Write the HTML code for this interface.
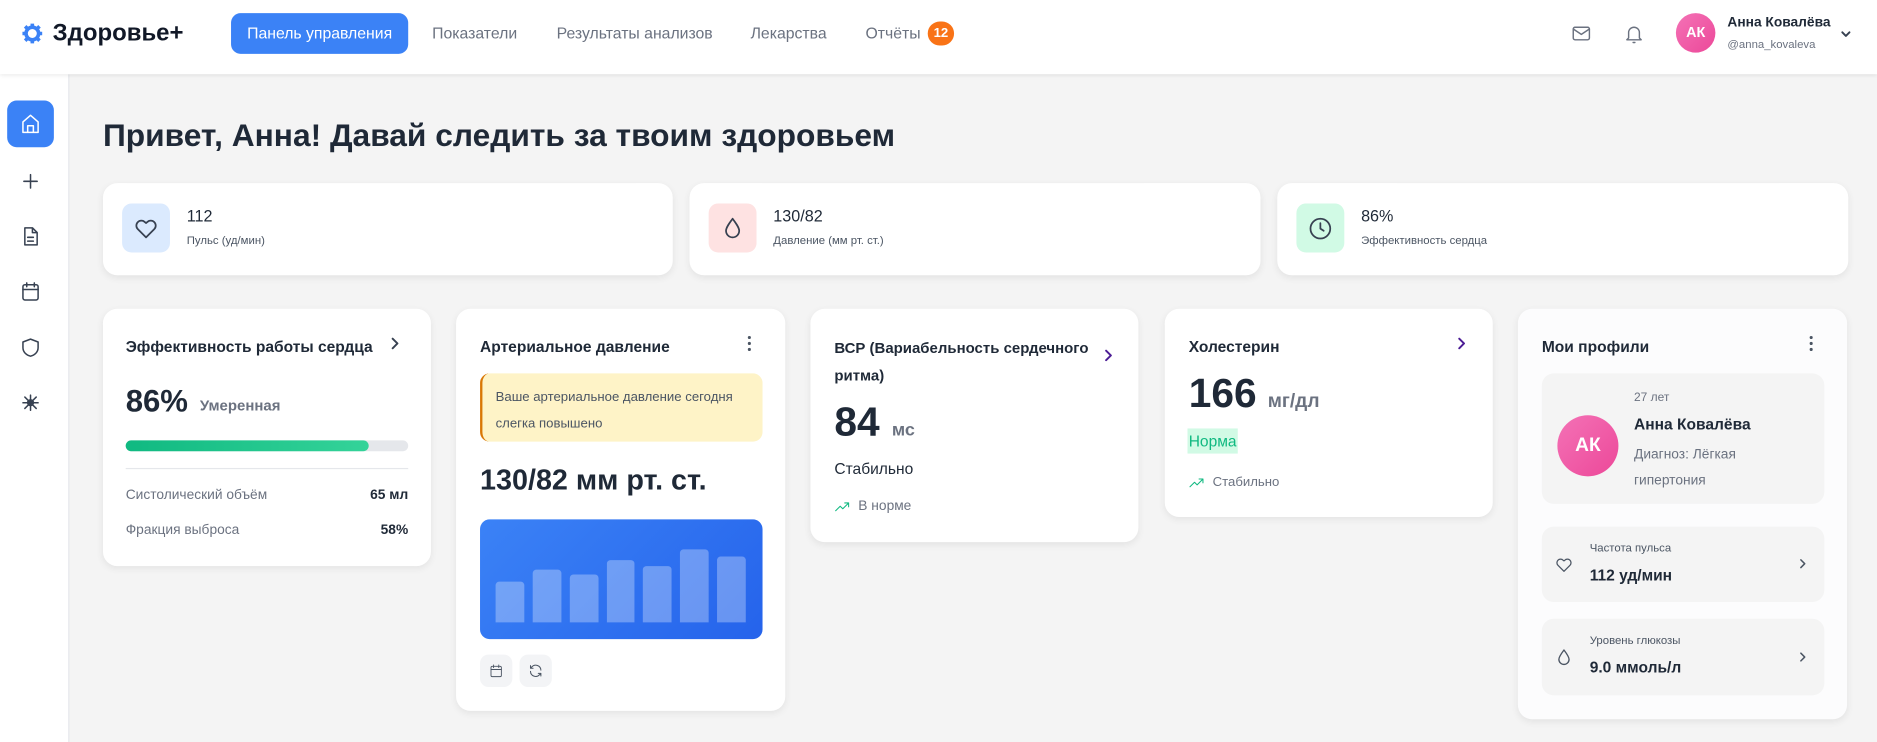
<!DOCTYPE html>
<html><head><meta charset="utf-8"><style>
*{box-sizing:border-box;margin:0;padding:0}
html,body{width:1877px;height:742px;overflow:hidden;background:#f4f4f4}
#w{position:absolute;left:0;top:0;width:1568px;height:620px;transform:scale(1.19707,1.1968);transform-origin:0 0;font-family:"Liberation Sans","DejaVu Sans",sans-serif;color:#1f2937;background:#f4f4f4}
.a{position:absolute}
.hdr{left:0;top:0;width:1568px;height:62px;background:#fff;box-shadow:0 1px 3px rgba(0,0,0,.08);z-index:2}
.nav{top:11px;height:34px;line-height:34px;font-size:13.2px;color:#6b7280}
.side{left:0;top:62px;width:58px;height:558px;background:#fff;border-right:1px solid #e5e7eb}
.card{background:#fff;border-radius:12px;box-shadow:0 2px 6px rgba(0,0,0,.07)}
.ic{stroke:#374151;fill:none;stroke-width:1.6;stroke-linecap:round;stroke-linejoin:round}
.t{font-size:13px;font-weight:bold;color:#1f2937}
.sq{width:40px;height:41px;border-radius:8px;left:16px;top:17px;display:flex;align-items:center;justify-content:center}
.sv{left:70px;top:20px;font-size:13.5px}
.sl{left:70px;top:43px;font-size:9.5px;color:#4b5563}
.gray{background:#f4f4f4;border-radius:10px}
</style></head><body><div id="w">
<div class="a hdr">
 <svg class="a" style="left:18px;top:19px" width="18" height="18" viewBox="0 0 24 24"><circle cx="12" cy="12" r="7" fill="none" stroke="#3b82f6" stroke-width="4"/><g stroke="#3b82f6" stroke-width="4"><line x1="12" y1="1" x2="12" y2="4"/><line x1="12" y1="20" x2="12" y2="23"/><line x1="1" y1="12" x2="4" y2="12"/><line x1="20" y1="12" x2="23" y2="12"/><line x1="4" y1="4" x2="6" y2="6"/><line x1="18" y1="18" x2="20" y2="20"/><line x1="4" y1="20" x2="6" y2="18"/><line x1="18" y1="6" x2="20" y2="4"/></g></svg>
 <div class="a" style="left:44px;top:17px;font-size:20px;font-weight:bold;color:#111827">Здоровье+</div>
 <div class="a nav" style="left:193px;width:148px;background:#3b82f6;color:#fff;border-radius:8px;text-align:center">Панель управления</div>
 <div class="a nav" style="left:361px">Показатели</div>
 <div class="a nav" style="left:465px">Результаты анализов</div>
 <div class="a nav" style="left:627px">Лекарства</div>
 <div class="a nav" style="left:723px">Отчёты</div>
 <div class="a" style="left:775px;top:18px;width:22px;height:20px;border-radius:10px;background:#f97316;color:#fff;font-size:11px;font-weight:bold;text-align:center;line-height:20px">12</div>
 <svg class="a ic" style="left:1312px;top:19px;stroke:#6b7280" width="18" height="18" viewBox="0 0 24 24"><rect x="3" y="5" width="18" height="14" rx="2"/><path d="M3 7l9 6 9-6"/></svg>
 <svg class="a ic" style="left:1356px;top:18px;stroke:#6b7280" width="18" height="20" viewBox="0 0 24 24"><path d="M6 17V11a6 6 0 0112 0v6l2 2H4zM11 22h2"/></svg>
 <div class="a" style="left:1400px;top:11px;width:33px;height:33px;border-radius:50%;background:linear-gradient(135deg,#f472b6,#ec4899);color:#fff;font-size:12px;font-weight:bold;text-align:center;line-height:33px">АК</div>
 <div class="a" style="left:1443px;top:13px;font-size:11.5px;font-weight:bold">Анна Ковалёва</div>
 <div class="a" style="left:1443px;top:32px;font-size:9.5px;color:#6b7280">@anna_kovaleva</div>
 <svg class="a ic" style="left:1537px;top:24px" width="10" height="10" viewBox="0 0 10 10"><path d="M2 3l3 3 3-3"/></svg>
</div>
<div class="a side">
 <div class="a" style="left:6px;top:22px;width:39px;height:39px;border-radius:8px;background:#3b82f6"></div>
 <svg class="a ic" style="left:16px;top:32px;stroke:#fff" width="19" height="19" viewBox="0 0 24 24"><path d="M4 10l8-7 8 7v11H4z M9 21v-7h6v7"/></svg>
 <svg class="a ic" style="left:16px;top:80px" width="19" height="19" viewBox="0 0 24 24"><path d="M12 5v14M5 12h14"/></svg>
 <svg class="a ic" style="left:16px;top:126px" width="19" height="19" viewBox="0 0 24 24"><path d="M6 3h8l5 5v13H6z M14 3v5h5 M9 13h6 M9 17h6"/></svg>
 <svg class="a ic" style="left:16px;top:172px" width="19" height="19" viewBox="0 0 24 24"><rect x="4" y="5" width="16" height="16" rx="2"/><path d="M4 10h16M8 3v4M16 3v4"/></svg>
 <svg class="a ic" style="left:16px;top:219px" width="19" height="19" viewBox="0 0 24 24"><path d="M12 3l8 3v6c0 5-4 8-8 9-4-1-8-4-8-9V6z"/></svg>
 <svg class="a ic" style="left:16px;top:265px" width="19" height="19" viewBox="0 0 24 24"><path d="M12 4v16M4 12h16M6 6l12 12M18 6L6 18"/><circle cx="12" cy="12" r="3"/></svg>
</div>
<div class="a" style="left:86px;top:98px;font-size:26.5px;font-weight:bold;color:#1f2937">Привет, Анна! Давай следить за твоим здоровьем</div>

<div class="a card" style="left:86px;top:153px;width:476px;height:77px">
 <div class="a sq" style="background:#dbeafe"><svg class="ic" width="22" height="22" viewBox="0 0 24 24"><path d="M12 20l-7.5-7.5a4.5 4.5 0 016.4-6.4L12 7l1.1-.9a4.5 4.5 0 016.4 6.4z"/></svg></div>
 <div class="a sv">112</div><div class="a sl">Пульс (уд/мин)</div></div>
<div class="a card" style="left:576px;top:153px;width:477px;height:77px">
 <div class="a sq" style="background:#fee2e2"><svg class="ic" width="22" height="22" viewBox="0 0 24 24"><path d="M12 3c3 4 6 8 6 11a6 6 0 01-12 0c0-3 3-7 6-11z"/></svg></div>
 <div class="a sv">130/82</div><div class="a sl">Давление (мм рт. ст.)</div></div>
<div class="a card" style="left:1067px;top:153px;width:477px;height:77px">
 <div class="a sq" style="background:#d1fae5"><svg class="ic" width="22" height="22" viewBox="0 0 24 24"><circle cx="12" cy="12" r="9"/><path d="M12 7v5l3 2"/></svg></div>
 <div class="a sv">86%</div><div class="a sl">Эффективность сердца</div></div>

<div class="a card" style="left:86px;top:258px;width:274px;height:215px">
 <div class="a t" style="left:19px;top:24px">Эффективность работы сердца</div>
 <svg class="a ic" style="left:239px;top:24px" width="10" height="10" viewBox="0 0 10 10"><path d="M3 1l4 4-4 4"/></svg>
 <div class="a" style="left:19px;top:62px;font-size:26px;font-weight:bold">86%</div>
 <div class="a" style="left:81px;top:74px;font-size:12.5px;font-weight:bold;color:#6b7280">Умеренная</div>
 <div class="a" style="left:19px;top:110px;width:236px;height:9px;border-radius:5px;background:#e5e7eb"><div style="width:203px;height:9px;border-radius:5px;background:linear-gradient(90deg,#10b981,#34d399)"></div></div>
 <div class="a" style="left:19px;top:133px;width:236px;height:1px;background:#e5e7eb"></div>
 <div class="a" style="left:19px;top:150px;font-size:11.5px;color:#6b7280">Систолический объём</div>
 <div class="a" style="right:19px;top:150px;font-size:11.5px;font-weight:bold">65 мл</div>
 <div class="a" style="left:19px;top:179px;font-size:11.5px;color:#6b7280">Фракция выброса</div>
 <div class="a" style="right:19px;top:179px;font-size:11.5px;font-weight:bold">58%</div>
</div>

<div class="a card" style="left:381px;top:258px;width:275px;height:336px">
 <div class="a t" style="left:20px;top:24px">Артериальное давление</div>
 <svg class="a" style="left:243px;top:22px" width="4" height="14" viewBox="0 0 4 14"><circle cx="2" cy="2" r="1.3" fill="#4b5563"/><circle cx="2" cy="7" r="1.3" fill="#4b5563"/><circle cx="2" cy="12" r="1.3" fill="#4b5563"/></svg>
 <div class="a" style="left:20px;top:54px;width:236px;height:57px;background:#fef3c7;border-left:2px solid #d97706;border-radius:8px;padding:9px 0 0 11px;font-size:11px;line-height:22px;color:#4b5563">Ваше артериальное давление сегодня слегка повышено</div>
 <div class="a" style="left:20px;top:130px;font-size:24px;font-weight:bold">130/82 мм рт. ст.</div>
 <div class="a" style="left:20px;top:176px;width:236px;height:100px;border-radius:8px;background:linear-gradient(135deg,#3b82f6,#2563eb)">
  <div class="a" style="left:13px;bottom:14px;width:24px;height:34px;background:rgba(255,255,255,.3);border-radius:3px 3px 0 0"></div>
  <div class="a" style="left:44px;bottom:14px;width:24px;height:44px;background:rgba(255,255,255,.3);border-radius:3px 3px 0 0"></div>
  <div class="a" style="left:75px;bottom:14px;width:24px;height:40px;background:rgba(255,255,255,.3);border-radius:3px 3px 0 0"></div>
  <div class="a" style="left:106px;bottom:14px;width:23px;height:52px;background:rgba(255,255,255,.3);border-radius:3px 3px 0 0"></div>
  <div class="a" style="left:136px;bottom:14px;width:24px;height:47px;background:rgba(255,255,255,.3);border-radius:3px 3px 0 0"></div>
  <div class="a" style="left:167px;bottom:14px;width:24px;height:61px;background:rgba(255,255,255,.3);border-radius:3px 3px 0 0"></div>
  <div class="a" style="left:198px;bottom:14px;width:24px;height:55px;background:rgba(255,255,255,.3);border-radius:3px 3px 0 0"></div>
 </div>
 <div class="a" style="left:20px;top:289px;width:27px;height:27px;border-radius:7px;background:#f3f4f6"></div>
 <svg class="a ic" style="left:27px;top:296px;stroke:#4b5563;stroke-width:1.4" width="13" height="13" viewBox="0 0 24 24"><rect x="4" y="5" width="16" height="16" rx="2"/><path d="M4 10h16M8 3v4M16 3v4"/></svg>
 <div class="a" style="left:53px;top:289px;width:27px;height:27px;border-radius:7px;background:#f3f4f6"></div>
 <svg class="a ic" style="left:60px;top:296px;stroke:#4b5563;stroke-width:1.6" width="13" height="13" viewBox="0 0 24 24"><path d="M20 11a8 8 0 00-14-5l-2 2M4 4v4h4M4 13a8 8 0 0014 5l2-2M20 20v-4h-4"/></svg>
</div>

<div class="a card" style="left:677px;top:258px;width:274px;height:195px">
 <div class="a t" style="left:20px;top:22px;width:222px;line-height:23px;font-size:12.5px">ВСР (Вариабельность сердечного ритма)</div>
 <svg class="a ic" style="left:244px;top:34px;stroke:#4c1d95" width="10" height="10" viewBox="0 0 10 10"><path d="M3 1l4 4-4 4"/></svg>
 <div class="a" style="left:20px;top:76px;font-size:34px;font-weight:bold">84</div>
 <div class="a" style="left:68px;top:93px;font-size:15px;font-weight:bold;color:#6b7280">мс</div>
 <div class="a" style="left:20px;top:126px;font-size:13px">Стабильно</div>
 <svg class="a ic" style="left:20px;top:160px;stroke:#10b981" width="13" height="11" viewBox="0 0 24 20"><path d="M2 16l7-7 4 4 9-9M16 4h6v6"/></svg>
 <div class="a" style="left:40px;top:159px;font-size:11.5px;color:#6b7280">В норме</div>
</div>

<div class="a card" style="left:973px;top:258px;width:274px;height:174px">
 <div class="a t" style="left:20px;top:24px">Холестерин</div>
 <svg class="a ic" style="left:243px;top:24px;stroke:#4c1d95" width="10" height="10" viewBox="0 0 10 10"><path d="M3 1l4 4-4 4"/></svg>
 <div class="a" style="left:20px;top:52px;font-size:34px;font-weight:bold">166</div>
 <div class="a" style="left:86px;top:69px;font-size:16px;font-weight:bold;color:#6b7280">мг/дл</div>
 <div class="a" style="left:19px;top:100px;height:21px;padding:0 1px;background:#d1fae5;color:#10b981;font-size:13px;line-height:21px">Норма</div>
 <svg class="a ic" style="left:20px;top:140px;stroke:#10b981" width="13" height="11" viewBox="0 0 24 20"><path d="M2 16l7-7 4 4 9-9M16 4h6v6"/></svg>
 <div class="a" style="left:40px;top:139px;font-size:11px;color:#6b7280">Стабильно</div>
</div>

<div class="a card" style="left:1268px;top:258px;width:275px;height:343px;background:#fcfcfd">
 <div class="a t" style="left:20px;top:24px">Мои профили</div>
 <svg class="a" style="left:243px;top:22px" width="4" height="14" viewBox="0 0 4 14"><circle cx="2" cy="2" r="1.3" fill="#4b5563"/><circle cx="2" cy="7" r="1.3" fill="#4b5563"/><circle cx="2" cy="12" r="1.3" fill="#4b5563"/></svg>
 <div class="a gray" style="left:20px;top:54px;width:236px;height:109px">
  <div class="a" style="left:13px;top:35px;width:51px;height:51px;border-radius:50%;background:linear-gradient(135deg,#f472b6,#ec4899);color:#fff;font-size:16px;font-weight:bold;text-align:center;line-height:51px">АК</div>
  <div class="a" style="left:77px;top:15px;font-size:10px;color:#6b7280">27 лет</div>
  <div class="a" style="left:77px;top:35px;font-size:13px;font-weight:bold">Анна Ковалёва</div>
  <div class="a" style="left:77px;top:57px;font-size:11.5px;line-height:22px;color:#6b7280;width:100px">Диагноз: Лёгкая гипертония</div>
 </div>
 <div class="a gray" style="left:20px;top:182px;width:236px;height:63px">
  <svg class="a ic" style="left:10px;top:24px;stroke:#4b5563" width="17" height="16" viewBox="0 0 24 24"><path d="M12 20l-7.5-7.5a4.5 4.5 0 016.4-6.4L12 7l1.1-.9a4.5 4.5 0 016.4 6.4z"/></svg>
  <div class="a" style="left:40px;top:13px;font-size:9.5px;color:#4b5563">Частота пульса</div>
  <div class="a" style="left:40px;top:33px;font-size:13px;font-weight:bold">112 уд/мин</div>
  <svg class="a ic" style="left:214px;top:26px;stroke:#4b5563" width="8" height="10" viewBox="0 0 10 10"><path d="M3 1l4 4-4 4"/></svg>
 </div>
 <div class="a gray" style="left:20px;top:259px;width:236px;height:64px">
  <svg class="a ic" style="left:10px;top:24px;stroke:#4b5563" width="17" height="17" viewBox="0 0 24 24"><path d="M12 3c3 4 6 8 6 11a6 6 0 01-12 0c0-3 3-7 6-11z"/></svg>
  <div class="a" style="left:40px;top:13px;font-size:9.5px;color:#4b5563">Уровень глюкозы</div>
  <div class="a" style="left:40px;top:33px;font-size:13px;font-weight:bold">9.0 ммоль/л</div>
  <svg class="a ic" style="left:214px;top:27px;stroke:#4b5563" width="8" height="10" viewBox="0 0 10 10"><path d="M3 1l4 4-4 4"/></svg>
 </div>
</div>
</div></body></html>
